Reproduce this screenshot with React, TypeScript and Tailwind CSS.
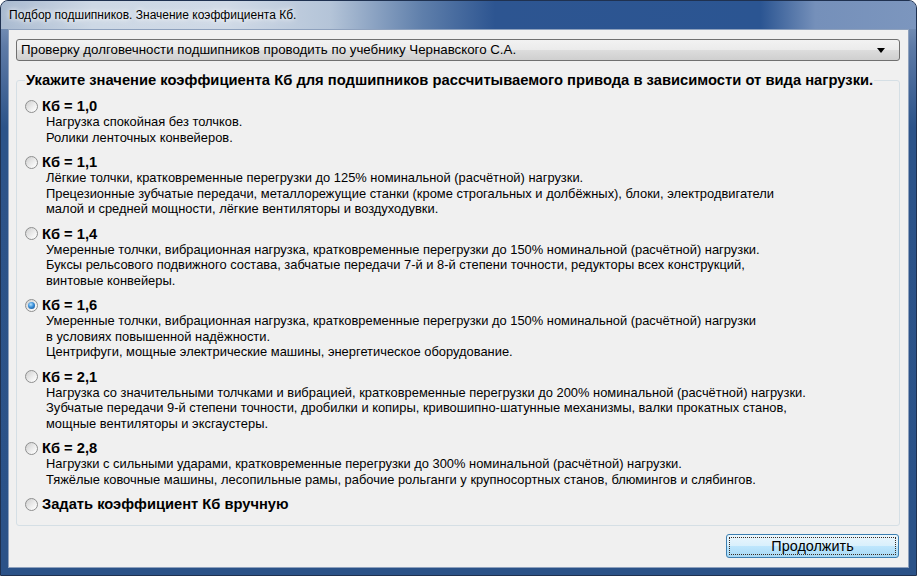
import React from "react";

interface Option {
  value: string;
  lines: string[];
  checked?: boolean;
}

const OPTIONS: Option[] = [
  {
    value: "1,0",
    lines: ["Нагрузка спокойная без толчков.", "Ролики ленточных конвейеров."],
  },
  {
    value: "1,1",
    lines: [
      "Лёгкие толчки, кратковременные перегрузки до 125% номинальной (расчётной) нагрузки.",
      "Прецезионные зубчатые передачи, металлорежущие станки (кроме строгальных и долбёжных), блоки, электродвигатели",
      "малой и средней мощности, лёгкие вентиляторы и воздуходувки.",
    ],
  },
  {
    value: "1,4",
    lines: [
      "Умеренные толчки, вибрационная нагрузка, кратковременные перегрузки до 150% номинальной (расчётной) нагрузки.",
      "Буксы рельсового подвижного состава, забчатые передачи 7-й и 8-й степени точности, редукторы всех конструкций,",
      "винтовые конвейеры.",
    ],
  },
  {
    value: "1,6",
    checked: true,
    lines: [
      "Умеренные толчки, вибрационная нагрузка, кратковременные перегрузки до 150% номинальной (расчётной) нагрузки",
      "в условиях повышенной надёжности.",
      "Центрифуги, мощные электрические машины, энергетическое оборудование.",
    ],
  },
  {
    value: "2,1",
    lines: [
      "Нагрузка со значительными толчками и вибрацией, кратковременные перегрузки до 200% номинальной (расчётной) нагрузки.",
      "Зубчатые передачи 9-й степени точности, дробилки и копиры, кривошипно-шатунные механизмы, валки прокатных станов,",
      "мощные вентиляторы и эксгаустеры.",
    ],
  },
  {
    value: "2,8",
    lines: [
      "Нагрузки с сильными ударами, кратковременные перегрузки до 300% номинальной (расчётной) нагрузки.",
      "Тяжёлые ковочные машины, лесопильные рамы, рабочие рольганги у крупносортных станов, блюмингов и слябингов.",
    ],
  },
];

const Radio = ({ checked }: { checked?: boolean }) => (
  <span className="w-[13px] h-[13px] shrink-0 rounded-full border border-[#8e8f8f] bg-[linear-gradient(135deg,#cfcfcf_0%,#f4f4f4_70%,#ffffff_100%)] flex items-center justify-center">
    {checked && (
      <span className="w-[7px] h-[7px] rounded-full bg-[radial-gradient(circle_at_40%_35%,#b6e3ff_0%,#3a8fd8_45%,#0f4585_100%)]" />
    )}
  </span>
);

export default function App() {
  return (
    <div className="w-[917px] h-[576px] flex flex-col rounded-t-[8px] border border-[#1f3150] bg-[linear-gradient(180deg,#8fa5c4_0%,#5d7aa6_8%,#2c5389_22%,#2b5288_100%)] font-['Liberation_Sans',Arial,sans-serif] text-black overflow-hidden">
      {/* title bar */}
      <div className="h-[28px] shrink-0 flex items-center pl-2 text-[12px] bg-[linear-gradient(90deg,#a9bad0_0%,#cdd8e5_10%,#cfd9e6_25%,#b4c4d8_36%,#5f7fab_46%,#2d5591_54%,#2b5592_83%,#7590ba_89%,#7c96be_100%)]">
        <span className="[text-shadow:0_0_8px_#ffffff,0_0_4px_#ffffff]">
          Подбор подшипников. Значение коэффициента Кб.
        </span>
      </div>

      {/* client area */}
      <div className="flex-1 mx-[7px] mb-[7px] border border-[#8ea1bd] bg-[#f0f0f0] flex flex-col pt-[9px] pb-[9px] pl-[7px] pr-[8px]">
        {/* combobox */}
        <div className="h-[22px] shrink-0 flex items-center justify-between rounded-[3px] border border-[#707070] bg-[linear-gradient(180deg,#f2f2f2_0%,#ebebeb_49%,#dddddd_51%,#cfcfcf_100%)] pl-[4px] pr-[14px] text-[13.3px]">
          <span>Проверку долговечности подшипников проводить по учебнику Чернавского С.А.</span>
          <svg width="8" height="5" viewBox="0 0 8 5">
            <path d="M0 0h8L4 5z" fill="#000" />
          </svg>
        </div>

        {/* group box */}
        <fieldset className="flex-1 mt-[10px] min-w-0 rounded-[3px] border border-[#d5dfe5] pl-[8px] pr-2 pt-[9px]">
          <legend className="px-[1px] text-[14.75px] font-bold leading-[18px]">
            Укажите значение коэффициента Кб для подшипников рассчитываемого привода в зависимости от вида нагрузки.
          </legend>
          <div className="flex flex-col gap-[9px]">
            {OPTIONS.map((o) => (
              <div key={o.value}>
                <div className="flex items-center gap-[4px] h-[16px]">
                  <Radio checked={o.checked} />
                  <span className="text-[14.7px] font-bold leading-[16px]">Кб = {o.value}</span>
                </div>
                <div className="pl-[21px] text-[12.9px] leading-[15.5px]">
                  {o.lines.map((l) => (
                    <div key={l}>{l}</div>
                  ))}
                </div>
              </div>
            ))}
            <div className="flex items-center gap-[4px] h-[16px]">
              <Radio />
              <span className="text-[14.7px] font-bold leading-[16px]">Задать коэффициент Кб вручную</span>
            </div>
          </div>
        </fieldset>

        {/* buttons */}
        <div className="mt-[8px] flex justify-end pr-[1px]">
          <button className="w-[173px] h-[24px] p-[2px] rounded-[3px] border border-[#3c7fb1] bg-[linear-gradient(180deg,#eaf6fd_0%,#d9f0fc_49%,#bee6fd_51%,#a7d9f5_100%)] flex">
            <span className="flex-1 flex items-center justify-center border border-dotted border-[#3a2a20] text-[14.4px] leading-none">
              Продолжить
            </span>
          </button>
        </div>
      </div>
    </div>
  );
}
